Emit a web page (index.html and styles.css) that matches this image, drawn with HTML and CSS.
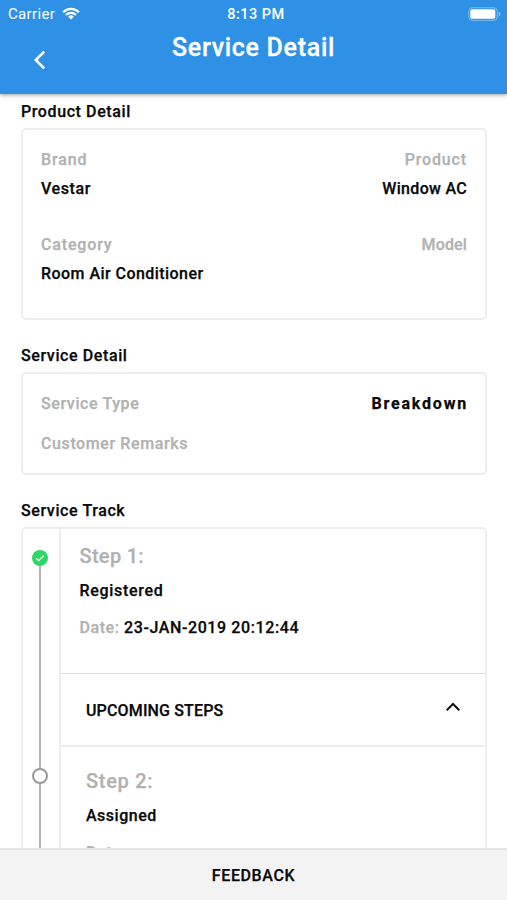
FILE: index.html
```html
<!DOCTYPE html>
<html lang="en">
<head>
<meta charset="utf-8">
<title>Service Detail</title>
<link rel="stylesheet" href="styles.css">
</head>
<body>
<div class="screen">
  <header class="header">
    <div class="status">
      <div class="carrier">
        <span>Carrier</span>
        <svg width="18" height="13" viewBox="0 0 18 13" fill="none" stroke="#fff" stroke-width="2.2"><path d="M1.2 5.2a11 11 0 0 1 15.6 0"/><path d="M4 8a7.1 7.1 0 0 1 10 0"/><path d="M9 12.4 6.2 9.7a4 4 0 0 1 5.6 0z" fill="#fff" stroke="none"/></svg>
      </div>
      <span class="clock">8:13 PM</span>
      <svg class="battery" width="33" height="14" viewBox="0 0 33 14"><rect x=".7" y=".7" width="28.6" height="12.6" rx="3.6" fill="none" stroke="#fff" stroke-opacity=".4"/><rect x="2.3" y="2.3" width="25" height="9.4" rx="1.8" fill="#fff"/><path d="M30.7 4.7a2.4 2.4 0 0 1 0 4.6z" fill="#fff" fill-opacity=".5"/></svg>
    </div>
    <div class="navbar">
      <svg class="back" width="14" height="20" viewBox="0 0 14 20" fill="none" stroke="#fff" stroke-width="2.6"><path d="M11.2 1.6 2.8 10l8.4 8.4"/></svg>
      <h1 class="title">Service Detail</h1>
    </div>
  </header>
  <main class="content">
    <h2 class="heading">Product Detail</h2>
    <section class="card product">
      <div class="row"><span class="label brand">Brand</span><span class="label prod">Product</span></div>
      <div class="row values"><span class="value">Vestar</span><span class="value window">Window AC</span></div>
      <div class="row"><span class="label category">Category</span><span class="label model">Model</span></div>
      <div class="row values"><span class="value room">Room Air Conditioner</span></div>
    </section>
    <h2 class="heading">Service Detail</h2>
    <section class="card service">
      <div class="row"><span class="label">Service Type</span><span class="value breakdown">Breakdown</span></div>
      <div class="row"><span class="label">Customer Remarks</span></div>
    </section>
    <h2 class="heading">Service Track</h2>
    <section class="card track">
      <div class="rail">
        <svg width="16" height="16" viewBox="0 0 16 16"><circle cx="8" cy="8" r="8" fill="#2fd566"/><path d="m4.3 8.3 2.4 2.4 5-5.1" fill="none" stroke="#fff" stroke-width="1.2"/></svg>
        <span class="line first"></span>
        <span class="dot"></span>
        <span class="line"></span>
      </div>
      <div class="steps">
        <div class="step current">
          <h3 class="step-name">Step 1:</h3>
          <p class="value registered">Registered</p>
          <p class="date"><span class="label">Date:</span> <span class="value">23-JAN-2019 20:12:44</span></p>
        </div>
        <div class="upcoming">
          <span class="value upcoming-text">UPCOMING STEPS</span>
          <svg width="16" height="10" viewBox="0 0 16 10" fill="none" stroke="#111" stroke-width="2"><path d="M1.7 8.3 8 2l6.3 6.3"/></svg>
        </div>
        <div class="step next">
          <h3 class="step-name two">Step 2:</h3>
          <p class="value assigned">Assigned</p>
          <p class="date"><span class="label">Date:</span></p>
        </div>
      </div>
    </section>
  </main>
  <footer class="footer">FEEDBACK</footer>
</div>
</body>
</html>
```
FILE: styles.css
```css
* { box-sizing: border-box; }
body { margin: 0; background: #fff; color: #090909; font: 500 16px/24px Roboto, "Liberation Sans", sans-serif; letter-spacing: .6px; }
h1, h2, h3, p { margin: 0; font-weight: 500; }
svg { display: block; flex: none; }
.screen { height: 900px; display: flex; flex-direction: column; overflow: hidden; }
.header { height: 94px; flex: none; background: #2e91e5; color: #fff; box-shadow: 0 1px 4px rgba(0,0,0,.4); }
.status { height: 28px; padding: 0 6px 0 8px; display: grid; grid-template-columns: 1fr auto 1fr; align-items: center; font-size: 15px; }
.carrier { display: flex; align-items: center; gap: 7px; font-weight: 400; letter-spacing: .35px; }
.carrier svg { margin-top: -2px; }
.clock { font-size: 14.5px; letter-spacing: .5px; padding: 1px 0 0 3px; }
.battery { justify-self: end; margin-top: -1px; }
.navbar { display: grid; grid-template-columns: 1fr auto 1fr; padding: 4px 33px 0; }
.back { margin-top: 18px; }
.title { font-size: 25px; line-height: 32px; letter-spacing: .7px; -webkit-text-stroke: .3px; }
.content { flex: 1; min-height: 0; overflow: hidden; padding: 6px 20px 0 21px; }
.heading, .value, .label, .step-name, .footer { -webkit-text-stroke: .25px; }
.heading { font-size: 16px; line-height: 24px; height: 28px; }
.card { border: 2px solid #ededed; border-radius: 5px; }
.row { display: flex; justify-content: space-between; height: 24px; }
.label { color: #b1b1b1; }
.product { height: 192px; padding: 18px 18px 0; margin-bottom: 24px; }
.values { margin-top: 5px; margin-bottom: 32px; }
.brand, .prod, .category { letter-spacing: .85px; }
.model, .upcoming-text { letter-spacing: .15px; }
.window { letter-spacing: .3px; }
.room { letter-spacing: .45px; }
.service { height: 103px; padding: 18px 18px 0; margin-bottom: 24px; }
.service .row { height: 40px; }
.breakdown { font-weight: 700; letter-spacing: 1.8px; margin-right: -1px; }
.track { display: flex; height: 420px; }
.rail { width: 38px; flex: none; border-right: 2px solid #ededed; padding: 21px 2px 0 0; display: flex; flex-direction: column; align-items: center; }
.line { width: 2px; height: 170px; flex: none; background: #b5b5b5; }
.line.first { height: 202px; }
.dot { width: 16px; height: 16px; flex: none; border: 2px solid #999; border-radius: 50%; }
.steps { flex: 1; }
.step { padding: 13px 18.5px 0; }
.current { height: 145px; border-bottom: 1px solid #dedede; }
.step-name { color: #b1b1b1; font-size: 20px; line-height: 28px; height: 37px; letter-spacing: .3px; }
.two { letter-spacing: .7px; }
.registered { letter-spacing: .7px; }
.assigned { letter-spacing: .5px; }
.date { margin-top: 13px; }
.date .label { letter-spacing: .55px; }
.upcoming { height: 73px; padding: 2px 24px 0 25px; border-bottom: 2px solid #ededed; display: flex; align-items: center; justify-content: space-between; }
.upcoming svg { margin-top: -8px; }
.next { padding: 20px 25px 0; }
.footer { height: 52px; flex: none; background: #f3f3f3; border-top: 2px solid #e4e4e4; text-align: center; line-height: 51px; }
```
